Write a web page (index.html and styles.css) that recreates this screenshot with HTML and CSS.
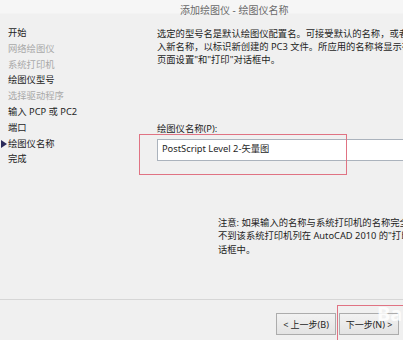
FILE: index.html
```html
<!DOCTYPE html>
<html lang="zh-CN">

<head>
    <meta charset="UTF-8">
    <meta name="viewport" content="width=device-width, initial-scale=1.0">
    <title>添加绘图仪 - 绘图仪名称</title>
    <link rel="stylesheet" href="styles.css">
</head>

<body>
    <div class="dialog">
        <!-- Title bar -->
        <div class="title">添加绘图仪 - 绘图仪名称</div>

        <div class="body">
            <!-- Wizard steps -->
            <ul class="steps">
                <li>开始</li>
                <li class="off">网络绘图仪</li>
                <li class="off">系统打印机</li>
                <li>绘图仪型号</li>
                <li class="off">选择驱动程序</li>
                <li>输入 PCP 或 PC2</li>
                <li>端口</li>
                <li class="current">绘图仪名称</li>
                <li>完成</li>
            </ul>

            <!-- Page content -->
            <div class="main">
                <p class="desc">
                    <span>选定的型号名是默认绘图仪配置名。可接受默认的名称，或者输</span>
                    <span>入新名称，以标识新创建的 PC3 文件。所应用的名称将显示在</span>
                    <span>页面设置"和"打印"对话框中。</span>
                </p>

                <label class="field-label">绘图仪名称(P):</label>
                <div class="field">PostScript Level 2-矢量图</div>

                <p class="note">
                    <span>注意: 如果输入的名称与系统打印机的名称完全相同，您将看</span>
                    <span>不到该系统打印机列在 AutoCAD 2010 的"打印"和"页面设置"对</span>
                    <span>话框中。</span>
                </p>
            </div>
        </div>

        <div class="footer">
            <button class="btn">&lt; 上一步(B)</button>
            <button class="btn">下一步(N) &gt;</button>
        </div>

        <!-- red annotation boxes -->
        <div class="mark mark-field"></div>
        <div class="mark mark-next"></div>
        <div class="watermark">Bai</div>
    </div>
</body>

</html>
```

FILE: styles.css
```css
body {
    margin: 0;
    padding: 0;
    overflow: hidden;
    background: #f0f0f0;
    font-family: 'Noto Sans', 'Noto Sans CJK SC', sans-serif;
}

.dialog {
    position: relative;
    width: 403px;
    height: 340px;
    overflow: hidden;
    background: #f0f0f0;
    color: #1e1e1e;
}

.title {
    height: 25px;
    padding-left: 180px;
    line-height: 20px;
    font-size: 10px;
    color: #6a6a6a;
    background: linear-gradient(#f6f6f6 0, #f6f6f6 13px, #f0f0f0 14px);
}

.body {
    display: flex;
    height: 274px;
}

.steps {
    list-style: none;
    margin: 0;
    padding: 0 0 0 8px;
    width: 149px;
    font-size: 9.3px;
    line-height: 15.8px;
}

.steps li {
    position: relative;
    white-space: nowrap;
    color: #1e1e1e;
}

.steps li.off {
    color: #a9a9a9;
}

.steps li.current::before {
    content: "";
    position: absolute;
    left: -7px;
    top: 4px;
    border-left: 6px solid #2a2a5a;
    border-top: 4px solid transparent;
    border-bottom: 4px solid transparent;
}

.main {
    flex: 1;
    min-width: 0;
}

.main span {
    display: block;
    white-space: nowrap;
}

.desc {
    margin: 1.5px 0 0;
    font-size: 9.3px;
    line-height: 13px;
}

.field-label {
    display: block;
    margin-top: 56px;
    font-size: 9.3px;
    line-height: 13px;
}

.field {
    margin-top: 4.5px;
    height: 20px;
    width: 260px;
    padding-left: 4px;
    line-height: 18px;
    font-size: 9.3px;
    background: #fff;
    border: 1px solid #abb3bd;
    white-space: nowrap;
}

.note {
    margin: 54.5px 0 0 61px;
    font-size: 9.3px;
    line-height: 13.5px;
}

.footer {
    display: flex;
    gap: 3px;
    height: 41px;
    padding: 13px 0 0 276px;
    box-sizing: border-box;
    border-top: 1px solid #d6d6d6;
}

.btn {
    width: 60px;
    height: 22px;
    flex-shrink: 0;
    padding: 0;
    font-family: inherit;
    font-size: 9px;
    color: #1e1e1e;
    background: linear-gradient(#f2f2f2, #e3e3e3);
    border: 1px solid #acacac;
}

.mark {
    position: absolute;
    border: 1.5px solid #e07383;
}

.mark-field {
    left: 139px;
    top: 134px;
    width: 206px;
    height: 39px;
}

.mark-next {
    left: 337px;
    top: 305px;
    width: 80px;
    height: 50px;
}

.watermark {
    position: absolute;
    left: 377px;
    top: 300px;
    font-size: 20px;
    font-weight: bold;
    color: rgba(255, 255, 255, 0.85);
}
```
